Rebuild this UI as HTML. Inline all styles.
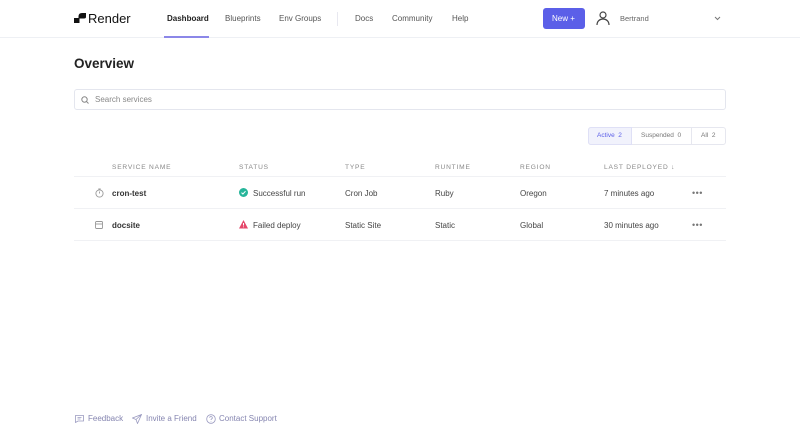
<!DOCTYPE html>
<html><head><meta charset="utf-8"><style>
*{box-sizing:border-box;margin:0;padding:0}
body{width:800px;height:442px;background:#fff;font-family:"Liberation Sans",sans-serif;color:#333;position:relative;overflow:hidden}
.hdr{position:absolute;left:0;top:0;width:800px;height:38px;border-bottom:1px solid #eef0f4}
.a{position:absolute;white-space:nowrap}
.nav{font-size:8px;color:#555;top:14px}
.th{font-size:6.6px;letter-spacing:.8px;color:#888;top:164px}
.td{font-size:8px;color:#444}
.line{position:absolute;left:74px;width:652px;height:1px;background:#f0f1f4}
</style></head><body>
<div class="hdr"></div>
<svg class="a" style="left:74px;top:13px" width="12" height="10" viewBox="0 0 12 10"><path d="M0 5h4.5V3.5Q4.5 0 8 0H12V4Q12 5.5 10 5.5H5.5V10H0z" fill="#111"/></svg>
<div class="a" style="left:88px;top:11px;font-size:13px;color:#111">Render</div>
<div class="a nav" style="left:167px;color:#222;font-weight:bold">Dashboard</div>
<div class="a" style="left:164px;top:36px;width:45px;height:2px;background:#8b87e8"></div>
<div class="a nav" style="left:225px">Blueprints</div>
<div class="a nav" style="left:279px">Env Groups</div>
<div class="a" style="left:337px;top:12px;width:1px;height:14px;background:#e8e8f0"></div>
<div class="a nav" style="left:355px">Docs</div>
<div class="a nav" style="left:392px">Community</div>
<div class="a nav" style="left:452px">Help</div>
<div class="a" style="left:543px;top:8px;width:42px;height:21px;border-radius:3px;background:#5b5fe8;color:#fff;font-size:8px;padding:6px 0 0 9px">New +</div>
<svg class="a" style="left:596px;top:11px" width="14" height="15" viewBox="0 0 14 15" fill="none" stroke="#444" stroke-width="1.2"><circle cx="7" cy="4" r="3"/><path d="M1 14c0-4 3-6 6-6s6 2 6 6"/></svg>
<div class="a nav" style="left:620px;font-size:7.5px;color:#666">Bertrand</div>
<svg class="a" style="left:714px;top:16px" width="7" height="5" viewBox="0 0 7 5"><path d="M1 1l2.5 2.5L6 1" fill="none" stroke="#777"/></svg>
<div class="a" style="left:74px;top:56px;font-size:13.5px;font-weight:bold;color:#222">Overview</div>
<div class="a" style="left:74px;top:89px;width:652px;height:21px;border:1px solid #e4e6ee;border-radius:3px"></div>
<svg class="a" style="left:81px;top:96px" width="8" height="8" viewBox="0 0 8 8" fill="none" stroke="#888"><circle cx="3.5" cy="3.5" r="2.7"/><path d="M5.5 5.5L7.5 7.5"/></svg>
<div class="a" style="left:95px;top:95px;font-size:8px;color:#888">Search services</div>
<div class="a" style="left:588px;top:127px;width:138px;height:18px;border:1px solid #e6e7ef;border-radius:3px"></div>
<div class="a" style="left:588px;top:127px;width:44px;height:18px;background:#f1f2fc;border:1px solid #dfe0f6;border-radius:3px 0 0 3px"></div>
<div class="a" style="left:691px;top:128px;width:1px;height:16px;background:#e6e7ef"></div>
<div class="a" style="left:597px;top:132px;font-size:6.5px;color:#5b5fe8">Active&nbsp; 2</div>
<div class="a" style="left:641px;top:132px;font-size:6.5px;color:#777">Suspended&nbsp; 0</div>
<div class="a" style="left:701px;top:132px;font-size:6.5px;color:#777">All&nbsp; 2</div>
<div class="a th" style="left:112px">SERVICE NAME</div>
<div class="a th" style="left:239px">STATUS</div>
<div class="a th" style="left:345px">TYPE</div>
<div class="a th" style="left:435px">RUNTIME</div>
<div class="a th" style="left:520px">REGION</div>
<div class="a th" style="left:604px">LAST DEPLOYED ↓</div>
<div class="line" style="top:176px"></div>
<div class="line" style="top:208px"></div>
<div class="line" style="top:240px"></div>
<svg class="a" style="left:95px;top:188px" width="9" height="10" viewBox="0 0 9 10" fill="none" stroke="#999" stroke-width=".9"><circle cx="4.5" cy="5.5" r="3.6"/><path d="M3.3 1h2.4M4.5 3.5v2"/></svg>
<div class="a td" style="left:112px;top:189px;font-weight:bold;color:#333">cron-test</div>
<svg class="a" style="left:239px;top:188px" width="9" height="9" viewBox="0 0 9 9"><circle cx="4.5" cy="4.5" r="4.5" fill="#26b59a"/><path d="M2.5 4.6l1.4 1.4 2.6-2.8" fill="none" stroke="#fff" stroke-width="1"/></svg>
<div class="a td" style="left:253px;top:189px">Successful run</div>
<div class="a td" style="left:345px;top:189px">Cron Job</div>
<div class="a td" style="left:435px;top:189px">Ruby</div>
<div class="a td" style="left:520px;top:189px">Oregon</div>
<div class="a td" style="left:604px;top:189px">7 minutes ago</div>
<div class="a" style="left:692px;top:188px;font-size:9px;color:#777;letter-spacing:.5px">•••</div>
<svg class="a" style="left:95px;top:221px" width="8" height="8" viewBox="0 0 8 8" fill="none" stroke="#999" stroke-width=".9"><rect x=".5" y=".5" width="7" height="7" rx="1"/><path d="M.5 3h7"/></svg>
<div class="a td" style="left:112px;top:221px;font-weight:bold;color:#333">docsite</div>
<svg class="a" style="left:239px;top:220px" width="9" height="9" viewBox="0 0 9 9"><path d="M4.5 0L9 8.5H0z" fill="#e5476a"/><path d="M4.5 3v2.5M4.5 6.5v.8" stroke="#fff" stroke-width="1"/></svg>
<div class="a td" style="left:253px;top:221px">Failed deploy</div>
<div class="a td" style="left:345px;top:221px">Static Site</div>
<div class="a td" style="left:435px;top:221px">Static</div>
<div class="a td" style="left:520px;top:221px">Global</div>
<div class="a td" style="left:604px;top:221px">30 minutes ago</div>
<div class="a" style="left:692px;top:220px;font-size:9px;color:#777;letter-spacing:.5px">•••</div>
<svg class="a" style="left:75px;top:415px" width="9" height="8" viewBox="0 0 9 8" fill="none" stroke="#9a9ac0" stroke-width=".8"><path d="M.5.5h8v5.5H3L.5 7.5z"/><path d="M2.5 2.5h4M2.5 4h3"/></svg>
<div class="a" style="left:88px;top:414px;font-size:8px;color:#8585b0">Feedback</div>
<svg class="a" style="left:132px;top:414px" width="10" height="10" viewBox="0 0 10 10" fill="none" stroke="#9a9ac0" stroke-width=".8"><path d="M9.5.5L.5 4l3.5 1.5L5.5 9.5zM9.5.5L4 5.5"/></svg>
<div class="a" style="left:146px;top:414px;font-size:8px;color:#8585b0">Invite a Friend</div>
<svg class="a" style="left:206px;top:414px" width="10" height="10" viewBox="0 0 10 10" fill="none" stroke="#9a9ac0" stroke-width=".8"><circle cx="5" cy="5" r="4.3"/><path d="M3.7 3.8a1.3 1.3 0 1 1 1.8 1.2c-.5.2-.5.6-.5 1M5 7.3v.4"/></svg>
<div class="a" style="left:219px;top:414px;font-size:8px;color:#8585b0">Contact Support</div>
</body></html>
